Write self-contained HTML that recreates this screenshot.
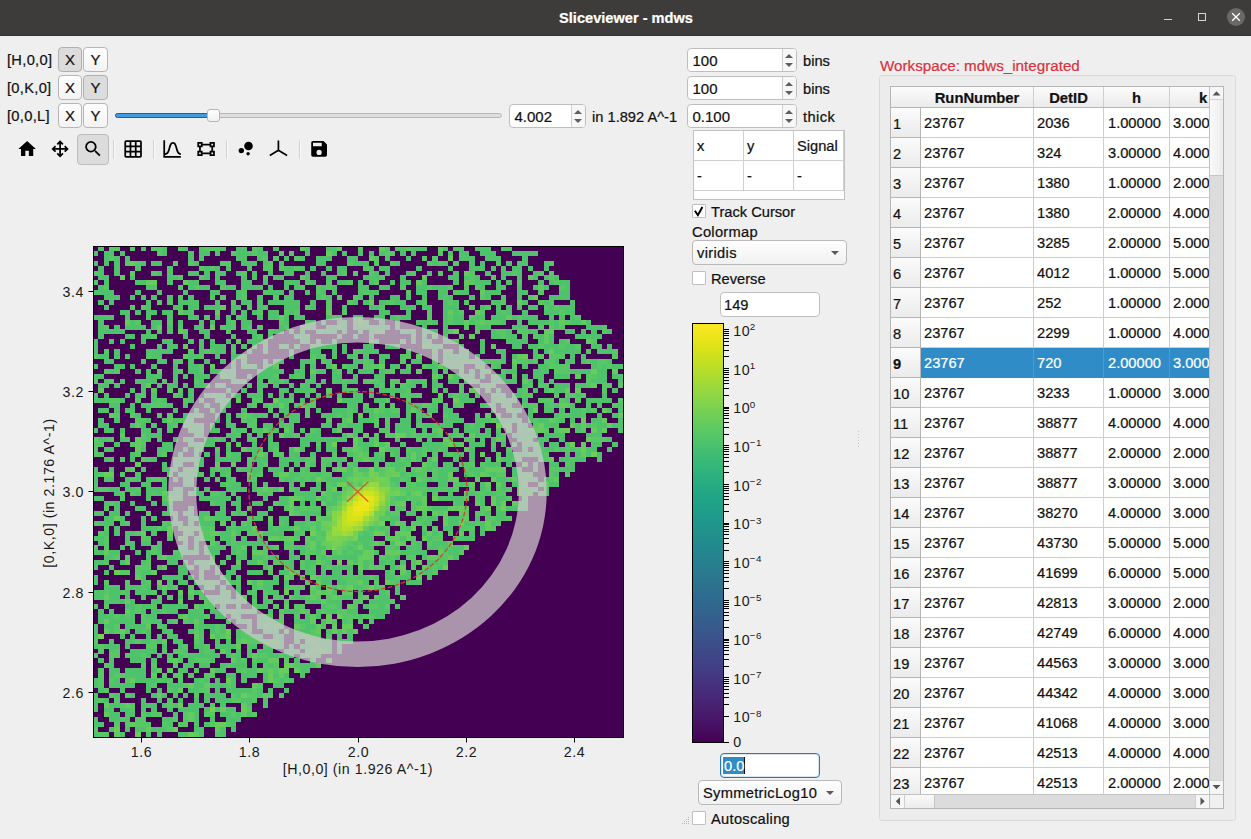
<!DOCTYPE html>
<html>
<head>
<meta charset="utf-8">
<title>Sliceviewer - mdws</title>
<style>
*{box-sizing:border-box;margin:0;padding:0}
html,body{width:1251px;height:839px;overflow:hidden;background:#efefef;font-family:"Liberation Sans",sans-serif;font-size:15px;color:#111}
.a{position:absolute}
.t{position:absolute;white-space:nowrap;line-height:1;-webkit-text-stroke:0.22px}
.btn,.spin .v{-webkit-text-stroke:0.22px}
#titlebar{left:0;top:0;width:1251px;height:36px;background:#3d3c3a;border-bottom:1px solid #343331}
#title{left:0;width:1251px;padding-left:1px;top:11px;text-align:center;color:#fff;font-weight:bold;font-size:14.6px}
.btn{position:absolute;width:24px;height:25px;border:1px solid #b6b6b6;border-radius:4px;background:linear-gradient(#fefefe,#f3f3f3);text-align:center;line-height:23px;font-size:15px}
.btn.on{background:#dcdcdc;border-color:#b0b0b0}
.spin{position:absolute;height:24px;border:1px solid #bfbfbf;border-radius:4px;background:#fff}
.spin .v{position:absolute;left:4.5px;top:4px;line-height:1;font-size:15px}
.spin .ar{position:absolute;right:0;top:0;width:14px;height:22px;border-left:1px solid #cfcfcf;background:#f7f7f7;border-radius:0 3px 3px 0}
.spin .ar:before{content:"";position:absolute;left:2.3px;top:5px;border:4px solid transparent;border-top:0;border-bottom:4px solid #5e5e5e}
.spin .ar:after{content:"";position:absolute;left:2.3px;top:14px;border:4px solid transparent;border-bottom:0;border-top:4px solid #5e5e5e}
.edit{position:absolute;height:25px;border:1px solid #bfbfbf;border-radius:4px;background:#fff}
.chk{position:absolute;width:14px;height:14px;border:1px solid #c0c0c0;background:#fff;border-radius:1px}
.combo{position:absolute;height:25px;border:1px solid #b9b9b9;border-radius:4px;background:linear-gradient(#fefefe,#f1f1f1)}
.combo:after{content:"";position:absolute;right:7px;top:9.5px;border:4px solid transparent;border-bottom:0;border-top:4.5px solid #5a5a5a}
.ic{transform:translate(-0.4px,-0.6px)}
</style>
</head>
<body>
<style>.mt{font-family:"Liberation Sans",sans-serif;font-size:14.2px;letter-spacing:0.55px;fill:#1a1a1a}</style><!-- title bar -->
<div class="a" id="titlebar"></div>
<div class="t" id="title">Sliceviewer - mdws</div>
<svg class="a" style="left:1150px;top:0" width="101" height="36" viewBox="1150 0 101 36">
  <line x1="1164" y1="19.5" x2="1172" y2="19.5" stroke="#d6d5d3" stroke-width="1"/>
  <rect x="1198.5" y="13.5" width="7" height="7" fill="none" stroke="#d6d5d3" stroke-width="1"/>
  <circle cx="1236" cy="17" r="9" fill="#6a6967"/>
  <path d="M1232.2 13.2 L1239.8 20.8 M1239.8 13.2 L1232.2 20.8" stroke="#fff" stroke-width="1.3" fill="none"/>
</svg>

<!-- dimension rows -->
<div class="t" style="left:7px;top:53px;font-size:14.67px;letter-spacing:0.3px">[H,0,0]</div>
<div class="t" style="left:7px;top:81px;font-size:14.67px;letter-spacing:0.3px">[0,K,0]</div>
<div class="t" style="left:7px;top:109px;font-size:14.67px;letter-spacing:0.3px">[0,0,L]</div>
<div class="btn on" style="left:58px;top:47px">X</div><div class="btn" style="left:83px;top:47px;width:25px">Y</div>
<div class="btn" style="left:58px;top:75px">X</div><div class="btn on" style="left:83px;top:75px;width:25px">Y</div>
<div class="btn" style="left:58px;top:103px">X</div><div class="btn" style="left:83px;top:103px;width:25px">Y</div>

<!-- slider -->
<div class="a" style="left:115px;top:113px;width:387px;height:5px;border:1px solid #b8b8b8;border-radius:3px;background:#dedede"></div>
<div class="a" style="left:115px;top:113px;width:98px;height:5px;border:1px solid #1f639d;border-radius:3px;background:#3f9ce1"></div>
<div class="a" style="left:207px;top:109px;width:13px;height:13px;border:1px solid #b5b5b5;border-radius:3px;background:linear-gradient(#ffffff,#f0f0f0)"></div>

<div class="spin" style="left:509px;top:104px;width:77px"><span class="v">4.002</span><span class="ar"></span></div>
<div class="t" style="left:592px;top:110px;font-size:14.67px">in 1.892 A^-1</div>

<div class="spin" style="left:687px;top:48px;width:110px"><span class="v">100</span><span class="ar"></span></div>
<div class="spin" style="left:687px;top:76px;width:110px"><span class="v">100</span><span class="ar"></span></div>
<div class="spin" style="left:687px;top:104px;width:110px"><span class="v">0.100</span><span class="ar"></span></div>
<div class="t" style="left:803px;top:54px;font-size:14.67px">bins</div>
<div class="t" style="left:803px;top:82px;font-size:14.67px">bins</div>
<div class="t" style="left:803px;top:110px;font-size:14.67px;letter-spacing:0.4px">thick</div>
<!-- toolbar -->
<div class="a" style="left:77px;top:134px;width:32px;height:31px;background:#dcdcdc;border:1px solid #bcbcbc;border-radius:4px"></div>
<div class="a" style="left:113px;top:140px;width:1px;height:19px;background:#d2d2d2"></div><div class="a" style="left:114px;top:140px;width:1px;height:19px;background:#fafafa"></div>
<div class="a" style="left:153px;top:140px;width:1px;height:19px;background:#d2d2d2"></div><div class="a" style="left:154px;top:140px;width:1px;height:19px;background:#fafafa"></div>
<div class="a" style="left:226px;top:140px;width:1px;height:19px;background:#d2d2d2"></div><div class="a" style="left:227px;top:140px;width:1px;height:19px;background:#fafafa"></div>
<div class="a" style="left:299px;top:140px;width:1px;height:19px;background:#d2d2d2"></div><div class="a" style="left:300px;top:140px;width:1px;height:19px;background:#fafafa"></div>
<svg class="a ic" style="left:16.5px;top:138.5px" width="21" height="21" viewBox="0 0 24 24"><path fill="#000" d="M10,20V14H14V20H19V12H22L12,3L2,12H5V20H10Z"/></svg>
<svg class="a ic" style="left:49.7px;top:138.6px" width="21" height="21" viewBox="0 0 24 24"><path fill="#000" d="M13,11H18L16.5,9.5L17.92,8.08L21.84,12L17.92,15.92L16.5,14.5L18,13H13V18L14.5,16.5L15.92,17.92L12,21.84L8.08,17.92L9.5,16.5L11,18V13H6L7.5,14.5L6.08,15.92L2.16,12L6.08,8.08L7.5,9.5L6,11H11V6L9.5,7.5L8.08,6.08L12,2.16L15.92,6.08L14.5,7.5L13,6V11Z"/></svg>
<svg class="a ic" style="left:83px;top:139px" width="21" height="21" viewBox="0 0 24 24"><path fill="#000" d="M9.5,3A6.5,6.5 0 0,1 16,9.5C16,11.11 15.41,12.59 14.44,13.73L14.71,14H15.5L20.5,19L19,20.5L14,15.5V14.71L13.73,14.44C12.59,15.41 11.11,16 9.5,16A6.5,6.5 0 0,1 3,9.5A6.5,6.5 0 0,1 9.5,3M9.5,5C7,5 5,7 5,9.5C5,12 7,14 9.5,14C12,14 14,12 14,9.5C14,7 12,5 9.5,5Z"/></svg>
<svg class="a ic" style="left:122.9px;top:138.7px" width="21" height="21" viewBox="0 0 24 24"><path fill="#000" d="M10,4V8H14V4H10M16,4V8H20V4H16M16,10V14H20V10H16M16,16V20H20V16H16M14,20V16H10V20H14M8,20V16H4V20H8M8,14V10H4V14H8M8,8V4H4V8H8M10,14H14V10H10V14M4,2H20A2,2 0 0,1 22,4V20A2,2 0 0,1 20,22H4C2.92,22 2,21.1 2,20V4A2,2 0 0,1 4,2Z"/></svg>
<svg class="a ic" style="left:162.4px;top:138.5px" width="21" height="21" viewBox="0 0 24 24"><path fill="#000" d="M9.96,11.31C10.82,8.1 11.5,6 13,6C14.5,6 15.18,8.1 16.04,11.31C17,14.92 18.1,19 22,19V17C19.8,17 19,14.54 17.97,10.8C17.08,7.46 16.15,4 13,4C9.85,4 8.92,7.46 8.03,10.8C7.03,14.54 6.2,17 4,17V2H2V22H22V20H4V19C7.9,19 9,14.92 9.96,11.31Z"/></svg>
<svg class="a ic" style="left:195.6px;top:138.5px" width="21" height="21" viewBox="0 0 24 24"><path fill="#000" d="M2,4H8V6H16V4H22V10H20V14H22V20H16V18H8V20H2V14H4V10H2V4M16,10V8H8V10H6V14H8V16H16V14H18V10H16M4,6V8H6V6H4M18,6V8H20V6H18M4,16V18H6V16H4M18,16V18H20V16H18Z"/></svg>
<svg class="a ic" style="left:234px;top:139px" width="24" height="24" viewBox="234 139 24 24"><circle cx="248.9" cy="146.6" r="4.3"/><circle cx="241.7" cy="151.2" r="2.7"/><circle cx="248.5" cy="154.4" r="1.7"/></svg>
<svg class="a ic" style="left:266px;top:136px" width="26" height="26" viewBox="266 136 26 26"><path d="M278.8 141 V150.9 L270.2 156 M278.8 150.9 L287.5 156" fill="none" stroke="#000" stroke-width="1.7" stroke-linecap="butt"/></svg>
<svg class="a ic" style="left:308.5px;top:138.6px" width="21" height="21" viewBox="0 0 24 24"><path fill="#000" d="M15,9H5V5H15M12,19A3,3 0 0,1 9,16A3,3 0 0,1 12,13A3,3 0 0,1 15,16A3,3 0 0,1 12,19M17,3H5C3.89,3 3,3.9 3,5V19A2,2 0 0,0 5,21H19A2,2 0 0,0 21,19V7L17,3Z"/></svg>
<svg class="a" style="left:92.9px;top:245.9px" width="530.0" height="491.0" viewBox="0 0 100 100" preserveAspectRatio="none" shape-rendering="crispEdges"><rect width="100" height="100" fill="#440154"/><g stroke-width="1.02" fill="none" transform="translate(0,0.5)"><path stroke="#4ec36b" d="M1 0h1M9 0h1M13 0h1M17 0h1M20 0h1M24 0h1M27 0h2M31 0h1M34 0h1M40 0h1M44 0h2M55 0h1M57 0h2M60 0h3M66 0h1M68 0h2M72 0h3M77 0h2M0 1h1M2 1h2M5 1h1M13 1h1M18 1h1M20 1h2M23 1h1M27 1h3M31 1h2M40 1h1M45 1h1M47 1h1M50 1h1M52 1h1M54 1h1M58 1h1M60 1h1M67 1h1M69 1h2M73 1h3M79 1h5M2 2h1M4 2h1M6 2h1M18 2h1M20 2h1M27 2h2M31 2h1M36 2h1M39 2h1M42 2h3M48 2h2M55 2h1M59 2h1M69 2h3M74 2h3M81 2h1M0 3h1M2 3h1M4 3h1M9 3h1M11 3h2M19 3h1M28 3h3M32 3h1M35 3h1M42 3h2M49 3h3M57 3h1M64 3h1M66 3h1M71 3h1M73 3h1M78 3h1M80 3h2M85 3h1M1 4h1M4 4h1M8 4h1M14 4h1M21 4h1M23 4h1M25 4h1M29 4h1M36 4h2M39 4h1M41 4h1M44 4h1M46 4h2M52 4h1M54 4h2M61 4h1M67 4h1M71 4h3M75 4h1M77 4h1M79 4h2M82 4h1M85 4h1M1 5h1M4 5h1M12 5h1M14 5h1M18 5h2M21 5h1M23 5h2M27 5h1M30 5h1M33 5h1M36 5h2M40 5h1M43 5h1M46 5h1M53 5h1M55 5h1M59 5h1M63 5h1M68 5h1M74 5h1M77 5h2M80 5h1M83 5h1M1 6h2M7 6h1M14 6h2M21 6h1M23 6h1M28 6h1M30 6h1M34 6h2M40 6h1M44 6h2M51 6h3M58 6h1M67 6h2M70 6h1M72 6h1M77 6h1M80 6h1M83 6h1M85 6h1M87 6h1M2 7h1M8 7h2M14 7h1M18 7h2M23 7h2M28 7h2M32 7h1M36 7h3M41 7h1M46 7h2M50 7h1M52 7h1M56 7h1M58 7h2M62 7h1M68 7h1M72 7h3M76 7h1M78 7h1M84 7h1M86 7h1M88 7h2M1 8h1M10 8h2M18 8h1M20 8h2M25 8h2M28 8h4M33 8h1M36 8h1M38 8h1M43 8h1M45 8h1M50 8h2M54 8h2M61 8h2M64 8h3M73 8h1M76 8h2M80 8h1M83 8h1M85 8h1M89 8h1M0 9h4M8 9h1M12 9h1M17 9h1M22 9h2M27 9h1M33 9h3M37 9h1M40 9h1M43 9h1M45 9h1M50 9h1M52 9h2M61 9h2M65 9h2M69 9h2M74 9h3M80 9h2M88 9h2M2 10h3M7 10h1M9 10h1M11 10h1M14 10h1M18 10h1M27 10h1M31 10h1M36 10h2M42 10h1M44 10h1M50 10h1M52 10h1M56 10h2M59 10h1M62 10h1M65 10h1M67 10h1M71 10h1M74 10h1M77 10h1M80 10h1M86 10h4M1 11h1M3 11h1M10 11h1M16 11h4M23 11h1M28 11h2M31 11h1M33 11h6M41 11h1M49 11h1M51 11h1M54 11h1M57 11h2M61 11h1M66 11h1M68 11h1M75 11h2M81 11h1M85 11h1M90 11h1M2 12h1M10 12h1M15 12h2M18 12h2M21 12h3M26 12h2M31 12h1M36 12h3M41 12h1M47 12h1M52 12h2M58 12h3M62 12h2M66 12h3M73 12h1M76 12h1M78 12h1M80 12h1M82 12h2M86 12h1M88 12h3M5 13h2M8 13h1M10 13h2M13 13h2M17 13h2M26 13h1M28 13h1M30 13h1M33 13h2M37 13h1M54 13h2M59 13h1M66 13h1M68 13h1M76 13h1M78 13h1M81 13h1M85 13h3M89 13h2M0 14h4M6 14h1M10 14h1M14 14h1M18 14h2M23 14h1M25 14h1M28 14h1M31 14h1M33 14h2M36 14h1M38 14h2M44 14h1M46 14h1M49 14h2M53 14h2M56 14h1M58 14h2M66 14h1M68 14h2M72 14h2M75 14h3M79 14h1M81 14h3M86 14h1M88 14h1M90 14h1M1 15h1M7 15h1M11 15h2M16 15h1M20 15h1M22 15h1M25 15h1M28 15h2M36 15h1M41 15h1M43 15h1M46 15h2M49 15h1M51 15h1M54 15h1M57 15h1M61 15h2M64 15h1M66 15h1M68 15h2M71 15h1M77 15h1M80 15h1M82 15h4M87 15h1M90 15h2M93 15h1M1 16h1M4 16h1M6 16h4M11 16h1M14 16h1M19 16h2M25 16h1M28 16h1M35 16h1M41 16h1M44 16h2M47 16h1M49 16h7M57 16h1M62 16h1M66 16h1M72 16h3M79 16h3M87 16h1M93 16h3M1 17h5M10 17h1M12 17h1M14 17h1M20 17h2M29 17h2M34 17h2M37 17h1M39 17h1M42 17h4M47 17h1M50 17h1M52 17h1M58 17h3M63 17h2M66 17h1M75 17h1M78 17h1M82 17h2M89 17h2M92 17h1M94 17h1M97 17h1M1 18h1M6 18h2M9 18h2M17 18h1M21 18h1M26 18h1M30 18h1M33 18h1M38 18h3M49 18h1M52 18h1M62 18h1M75 18h2M78 18h2M84 18h1M86 18h1M91 18h5M0 19h1M3 19h1M5 19h1M9 19h1M13 19h2M18 19h1M20 19h1M22 19h1M25 19h1M29 19h4M39 19h2M45 19h1M53 19h1M60 19h1M63 19h1M67 19h1M73 19h1M78 19h4M84 19h1M86 19h1M88 19h1M0 20h1M7 20h1M12 20h1M14 20h2M20 20h1M22 20h3M26 20h1M28 20h1M30 20h1M32 20h1M36 20h1M41 20h5M47 20h1M51 20h2M55 20h2M64 20h1M69 20h1M73 20h1M79 20h2M82 20h2M85 20h3M89 20h2M94 20h2M97 20h1M0 21h1M4 21h1M10 21h5M20 21h1M23 21h2M29 21h1M37 21h1M41 21h2M45 21h1M47 21h1M51 21h3M69 21h2M73 21h1M76 21h2M83 21h1M85 21h1M87 21h5M95 21h3M1 22h2M4 22h1M6 22h1M11 22h2M18 22h2M23 22h1M26 22h2M37 22h1M42 22h1M45 22h1M48 22h1M51 22h1M54 22h2M64 22h1M66 22h5M72 22h1M77 22h1M79 22h1M83 22h1M90 22h1M92 22h1M2 23h2M12 23h2M18 23h1M21 23h1M24 23h1M26 23h1M32 23h1M35 23h1M39 23h2M44 23h1M49 23h2M52 23h1M54 23h1M60 23h2M66 23h3M70 23h1M72 23h2M77 23h1M82 23h1M87 23h1M89 23h2M92 23h1M94 23h1M97 23h1M0 24h1M4 24h2M7 24h1M11 24h1M15 24h1M18 24h2M26 24h1M28 24h3M32 24h2M39 24h1M41 24h1M44 24h1M48 24h2M56 24h2M63 24h2M66 24h3M73 24h1M76 24h1M81 24h1M84 24h2M94 24h1M96 24h1M98 24h2M3 25h1M8 25h1M10 25h1M15 25h1M18 25h2M22 25h4M31 25h5M38 25h2M42 25h2M45 25h1M48 25h1M50 25h3M54 25h1M58 25h2M64 25h1M71 25h1M73 25h1M78 25h2M83 25h3M90 25h4M95 25h2M0 26h2M10 26h3M15 26h1M17 26h1M19 26h3M25 26h2M29 26h1M31 26h3M37 26h1M39 26h1M41 26h1M45 26h2M49 26h1M53 26h2M65 26h1M68 26h4M73 26h1M76 26h2M81 26h1M83 26h2M87 26h3M95 26h2M98 26h2M2 27h1M5 27h1M8 27h4M15 27h1M20 27h1M26 27h3M31 27h1M34 27h1M36 27h1M40 27h2M43 27h1M45 27h2M48 27h2M54 27h1M60 27h2M64 27h1M67 27h2M70 27h1M72 27h1M75 27h5M82 27h1M84 27h1M86 27h1M94 27h3M99 27h1M1 28h2M4 28h1M9 28h1M12 28h1M14 28h2M17 28h1M19 28h2M24 28h1M31 28h2M34 28h1M37 28h1M40 28h1M42 28h1M47 28h1M53 28h1M59 28h2M62 28h1M64 28h2M81 28h1M87 28h3M91 28h2M7 29h1M9 29h1M18 29h1M25 29h1M28 29h1M31 29h1M35 29h2M38 29h3M47 29h1M52 29h1M54 29h5M66 29h1M76 29h1M80 29h1M83 29h1M85 29h1M87 29h2M98 29h1M0 30h1M2 30h1M6 30h1M8 30h1M11 30h1M16 30h1M18 30h1M21 30h1M24 30h1M27 30h1M29 30h3M33 30h1M35 30h1M37 30h1M40 30h1M42 30h1M44 30h1M46 30h1M49 30h2M52 30h1M56 30h1M60 30h1M67 30h1M69 30h2M76 30h1M79 30h2M91 30h1M96 30h1M0 31h3M5 31h1M11 31h1M13 31h1M18 31h1M20 31h1M23 31h3M35 31h2M39 31h1M47 31h4M53 31h2M69 31h3M75 31h1M78 31h2M81 31h1M89 31h1M93 31h5M3 32h2M7 32h1M9 32h2M14 32h1M17 32h1M21 32h1M25 32h1M29 32h1M32 32h1M34 32h1M36 32h1M38 32h1M48 32h2M59 32h3M64 32h1M66 32h1M73 32h1M75 32h1M77 32h1M85 32h1M87 32h1M90 32h1M93 32h1M95 32h1M99 32h1M1 33h2M4 33h1M6 33h2M10 33h1M15 33h1M19 33h1M22 33h1M24 33h1M28 33h1M35 33h2M42 33h1M45 33h3M49 33h1M51 33h2M55 33h1M59 33h1M61 33h1M63 33h2M66 33h2M79 33h2M82 33h1M85 33h2M88 33h1M90 33h2M93 33h1M97 33h1M99 33h1M8 34h1M17 34h3M23 34h1M25 34h1M27 34h1M30 34h2M34 34h1M36 34h3M43 34h3M47 34h1M52 34h1M54 34h4M59 34h1M61 34h2M67 34h2M72 34h1M79 34h1M82 34h1M87 34h1M90 34h2M95 34h1M98 34h1M1 35h1M4 35h1M10 35h1M13 35h1M15 35h1M17 35h2M23 35h1M25 35h1M29 35h1M35 35h1M37 35h2M50 35h3M58 35h2M61 35h1M66 35h4M72 35h3M76 35h4M82 35h1M84 35h2M88 35h1M90 35h1M94 35h2M99 35h1M1 36h2M7 36h1M9 36h1M11 36h1M14 36h1M17 36h1M20 36h1M22 36h1M25 36h2M32 36h2M35 36h1M37 36h1M43 36h2M46 36h1M48 36h3M57 36h3M62 36h6M70 36h1M72 36h1M81 36h1M85 36h3M91 36h1M93 36h1M95 36h2M98 36h2M0 37h1M2 37h2M5 37h1M9 37h2M12 37h1M14 37h1M19 37h1M22 37h2M27 37h1M31 37h1M33 37h2M37 37h1M39 37h1M42 37h1M45 37h1M49 37h2M57 37h3M62 37h1M68 37h1M70 37h3M74 37h1M81 37h1M91 37h1M95 37h1M99 37h1M10 38h3M19 38h2M25 38h2M29 38h1M31 38h1M33 38h1M36 38h2M40 38h3M47 38h1M49 38h1M59 38h1M61 38h1M63 38h2M67 38h1M72 38h3M76 38h1M79 38h5M85 38h4M93 38h3M1 39h2M5 39h2M10 39h1M12 39h1M15 39h1M18 39h1M21 39h2M24 39h1M26 39h1M29 39h1M33 39h1M39 39h9M50 39h1M52 39h1M57 39h1M63 39h1M71 39h1M73 39h1M75 39h1M80 39h2M84 39h2M88 39h1M97 39h1M4 40h1M13 40h2M18 40h5M30 40h1M33 40h2M39 40h2M44 40h1M50 40h3M54 40h1M58 40h1M62 40h4M71 40h3M77 40h1M81 40h2M84 40h1M86 40h2M89 40h1M94 40h2M98 40h1M2 41h2M9 41h1M12 41h3M17 41h1M20 41h1M25 41h1M29 41h3M33 41h1M37 41h1M39 41h1M42 41h1M44 41h2M51 41h1M56 41h2M60 41h2M63 41h2M66 41h1M71 41h1M75 41h1M81 41h1M83 41h1M85 41h2M88 41h1M90 41h1M93 41h2M97 41h1M7 42h1M12 42h1M16 42h1M19 42h1M21 42h1M23 42h1M26 42h2M30 42h1M37 42h2M41 42h1M48 42h1M53 42h1M57 42h1M59 42h1M61 42h1M66 42h1M68 42h2M71 42h1M78 42h4M83 42h2M89 42h1M91 42h1M93 42h1M95 42h1M2 43h1M7 43h1M11 43h1M15 43h1M17 43h4M23 43h5M30 43h3M35 43h5M46 43h1M53 43h2M57 43h1M59 43h1M61 43h1M63 43h1M68 43h1M71 43h1M74 43h1M77 43h2M88 43h2M91 43h2M95 43h1M13 44h1M15 44h2M19 44h2M31 44h1M35 44h2M38 44h1M41 44h1M44 44h1M46 44h1M49 44h1M56 44h3M64 44h1M66 44h2M69 44h1M74 44h3M78 44h1M83 44h1M86 44h2M90 44h1M0 45h1M3 45h1M9 45h1M13 45h3M18 45h2M22 45h1M24 45h2M28 45h4M33 45h3M40 45h1M48 45h1M50 45h2M53 45h1M57 45h1M63 45h1M65 45h4M71 45h3M79 45h2M83 45h1M88 45h3M0 46h1M8 46h1M16 46h4M22 46h1M24 46h1M30 46h1M34 46h1M37 46h2M42 46h1M47 46h2M58 46h1M60 46h1M65 46h2M70 46h1M72 46h1M75 46h1M79 46h1M87 46h1M0 47h1M2 47h2M6 47h1M8 47h1M10 47h1M13 47h1M17 47h2M21 47h1M25 47h1M36 47h2M39 47h1M41 47h1M44 47h4M56 47h2M59 47h1M63 47h1M65 47h2M76 47h2M80 47h1M83 47h1M85 47h1M0 48h1M5 48h2M9 48h2M13 48h1M17 48h2M24 48h1M26 48h2M30 48h1M32 48h1M37 48h1M42 48h1M45 48h1M48 48h1M57 48h1M61 48h2M65 48h2M69 48h2M73 48h1M77 48h1M79 48h2M86 48h2M0 49h1M3 49h2M6 49h2M10 49h4M15 49h2M19 49h1M21 49h1M25 49h4M30 49h1M34 49h1M38 49h1M41 49h2M63 49h2M67 49h1M73 49h1M77 49h1M81 49h1M85 49h1M4 50h1M8 50h1M10 50h1M12 50h1M14 50h3M18 50h3M24 50h1M32 50h1M38 50h4M45 50h2M59 50h1M62 50h1M67 50h1M71 50h1M74 50h2M81 50h1M85 50h1M0 51h2M10 51h1M15 51h2M20 51h6M27 51h1M32 51h1M35 51h2M40 51h2M43 51h1M45 51h1M57 51h2M65 51h5M73 51h1M76 51h2M2 52h1M4 52h1M7 52h1M11 52h1M13 52h2M23 52h2M26 52h2M30 52h2M35 52h2M39 52h1M41 52h1M44 52h2M61 52h1M68 52h2M73 52h1M76 52h1M81 52h1M4 53h1M8 53h2M14 53h1M18 53h1M24 53h1M27 53h1M29 53h1M33 53h1M38 53h1M64 53h3M78 53h2M81 53h1M0 54h2M3 54h2M6 54h1M13 54h1M15 54h1M17 54h2M20 54h2M23 54h2M27 54h1M31 54h2M39 54h4M55 54h1M59 54h2M74 54h1M76 54h2M2 55h2M5 55h1M9 55h1M11 55h1M15 55h1M18 55h1M20 55h1M23 55h3M30 55h2M35 55h2M40 55h1M56 55h2M61 55h1M63 55h2M67 55h2M72 55h1M76 55h2M1 56h3M5 56h1M9 56h1M14 56h2M18 56h1M20 56h3M26 56h1M29 56h1M36 56h1M38 56h2M42 56h1M56 56h1M62 56h2M67 56h2M70 56h2M73 56h1M75 56h1M4 57h1M9 57h3M13 57h1M16 57h1M25 57h1M27 57h3M33 57h1M35 57h3M39 57h2M42 57h1M52 57h1M54 57h1M59 57h1M66 57h2M73 57h1M2 58h1M4 58h1M6 58h2M11 58h1M18 58h1M24 58h2M27 58h1M32 58h4M38 58h1M43 58h1M51 58h1M55 58h1M62 58h1M64 58h1M71 58h1M73 58h1M0 59h2M6 59h1M19 59h1M24 59h2M28 59h1M31 59h1M41 59h1M50 59h3M58 59h1M63 59h1M69 59h3M1 60h1M7 60h1M9 60h2M12 60h1M17 60h1M19 60h1M23 60h1M25 60h1M27 60h6M42 60h1M49 60h1M51 60h1M56 60h1M61 60h1M64 60h3M5 61h1M7 61h1M12 61h1M16 61h2M19 61h1M21 61h4M26 61h1M30 61h1M32 61h2M38 61h2M42 61h2M48 61h1M51 61h2M57 61h1M59 61h3M63 61h2M66 61h1M68 61h2M0 62h2M3 62h2M8 62h1M10 62h1M12 62h1M16 62h4M21 62h3M26 62h1M28 62h1M37 62h1M39 62h1M42 62h1M47 62h1M49 62h2M53 62h1M58 62h5M67 62h2M2 63h2M10 63h1M14 63h2M25 63h1M27 63h2M30 63h2M33 63h2M37 63h2M43 63h1M45 63h5M55 63h1M57 63h1M62 63h1M65 63h1M68 63h1M0 64h2M5 64h1M9 64h1M14 64h2M17 64h1M19 64h1M21 64h1M29 64h2M32 64h1M35 64h1M37 64h1M40 64h2M44 64h1M49 64h1M51 64h1M54 64h1M56 64h1M58 64h1M63 64h2M0 65h1M3 65h1M12 65h1M16 65h2M20 65h2M23 65h1M26 65h2M32 65h1M37 65h1M40 65h1M43 65h1M45 65h4M51 65h1M56 65h1M63 65h1M65 65h1M2 66h1M9 66h2M16 66h2M23 66h1M25 66h2M29 66h3M35 66h2M40 66h2M43 66h1M45 66h2M55 66h1M59 66h1M62 66h2M0 67h1M9 67h1M13 67h4M18 67h1M24 67h2M27 67h1M34 67h1M43 67h4M50 67h2M53 67h1M55 67h2M58 67h2M63 67h1M0 68h1M9 68h1M14 68h1M16 68h2M19 68h2M23 68h1M26 68h1M30 68h1M32 68h3M36 68h1M43 68h2M46 68h2M51 68h1M57 68h1M59 68h3M2 69h3M7 69h2M10 69h1M12 69h1M14 69h1M22 69h1M24 69h1M27 69h1M30 69h1M32 69h2M42 69h1M45 69h1M49 69h2M57 69h1M0 70h2M3 70h2M6 70h1M8 70h3M13 70h1M19 70h1M24 70h1M27 70h1M29 70h1M33 70h2M38 70h1M45 70h1M50 70h1M54 70h1M57 70h1M0 71h2M3 71h2M6 71h1M9 71h1M16 71h1M21 71h5M30 71h1M35 71h1M38 71h2M47 71h2M54 71h2M2 72h4M7 72h1M11 72h2M22 72h1M26 72h3M32 72h1M40 72h3M44 72h3M52 72h4M6 73h2M9 73h2M13 73h5M20 73h1M24 73h1M27 73h1M31 73h2M43 73h1M46 73h1M51 73h1M54 73h1M57 73h1M1 74h1M3 74h1M7 74h1M9 74h1M11 74h2M14 74h2M18 74h2M22 74h4M27 74h2M33 74h1M36 74h3M42 74h1M44 74h2M48 74h2M52 74h4M1 75h3M5 75h1M7 75h1M10 75h2M18 75h3M23 75h2M26 75h2M31 75h1M40 75h1M42 75h1M50 75h1M53 75h2M1 76h1M3 76h5M11 76h2M14 76h1M18 76h1M20 76h1M27 76h1M31 76h2M34 76h1M38 76h3M43 76h1M47 76h1M52 76h1M0 77h1M2 77h2M6 77h4M13 77h1M20 77h3M24 77h1M31 77h1M33 77h1M35 77h1M40 77h2M51 77h1M0 78h1M3 78h1M6 78h1M8 78h1M10 78h1M13 78h2M18 78h1M20 78h1M22 78h1M24 78h1M27 78h1M29 78h1M32 78h3M38 78h3M44 78h1M46 78h1M48 78h1M0 79h1M5 79h1M7 79h1M10 79h1M12 79h1M14 79h2M20 79h1M23 79h1M27 79h1M31 79h1M34 79h2M38 79h1M46 79h1M48 79h1M3 80h1M6 80h2M9 80h2M12 80h1M15 80h2M20 80h1M23 80h1M25 80h1M35 80h1M38 80h1M42 80h3M46 80h3M0 81h1M2 81h3M6 81h1M13 81h1M16 81h1M19 81h2M23 81h4M29 81h2M33 81h3M37 81h1M40 81h1M43 81h2M46 81h1M3 82h1M7 82h5M17 82h1M20 82h1M22 82h1M25 82h1M27 82h1M29 82h1M31 82h3M36 82h3M44 82h1M46 82h1M7 83h2M10 83h1M12 83h1M14 83h1M16 83h1M18 83h6M25 83h1M27 83h1M29 83h1M33 83h2M36 83h1M42 83h1M1 84h1M3 84h1M7 84h3M11 84h1M16 84h1M18 84h1M22 84h1M27 84h1M31 84h2M38 84h1M41 84h1M3 85h1M17 85h2M20 85h2M24 85h1M26 85h3M30 85h1M33 85h1M39 85h3M3 86h2M6 86h4M11 86h1M16 86h2M23 86h2M29 86h2M39 86h2M3 87h1M6 87h4M25 87h2M28 87h3M32 87h1M34 87h1M36 87h1M39 87h1M0 88h1M4 88h1M8 88h4M13 88h1M19 88h1M21 88h1M23 88h1M26 88h1M28 88h1M32 88h1M35 88h1M37 88h1M0 89h1M3 89h5M10 89h1M14 89h3M19 89h2M22 89h3M26 89h1M34 89h2M1 90h1M5 90h1M10 90h1M12 90h1M15 90h1M18 90h2M23 90h1M25 90h5M31 90h1M33 90h1M36 90h1M0 91h1M4 91h1M7 91h1M11 91h1M13 91h1M15 91h1M17 91h1M21 91h4M27 91h1M31 91h1M35 91h1M0 92h1M2 92h1M9 92h1M12 92h1M16 92h1M19 92h1M21 92h1M23 92h3M28 92h2M32 92h1M0 93h1M3 93h2M9 93h3M13 93h1M15 93h1M18 93h3M24 93h1M29 93h1M32 93h1M0 94h1M2 94h2M5 94h2M9 94h1M11 94h1M14 94h1M16 94h4M21 94h1M23 94h1M25 94h2M3 95h2M6 95h2M10 95h1M15 95h1M19 95h1M24 95h2M27 95h1M29 95h1M0 96h1M3 96h2M6 96h1M13 96h2M19 96h1M22 96h1M25 96h3M0 97h2M14 97h1M19 97h1M21 97h1M26 97h1M3 98h1M6 98h1M8 98h2M11 98h3M19 98h2M24 98h1M26 98h1M0 99h1M5 99h1M10 99h1M12 99h1M16 99h2M20 99h1M24 99h1"/><path stroke="#58c765" d="M3 0h2M7 0h1M11 0h2M16 0h1M21 0h3M30 0h1M39 0h1M50 0h1M59 0h1M12 1h1M26 1h1M30 1h1M35 1h1M37 1h1M55 1h2M65 1h1M3 2h1M32 2h1M34 2h1M38 2h1M53 2h1M62 2h1M64 2h1M6 3h1M8 3h1M15 3h1M18 3h1M24 3h2M33 3h1M48 3h1M53 3h1M56 3h1M63 3h1M65 3h1M68 3h1M76 3h1M86 3h1M20 4h1M22 4h1M32 4h2M35 4h1M38 4h1M51 4h1M0 5h1M11 5h1M28 5h1M47 5h1M49 5h1M52 5h1M60 5h1M65 5h1M71 5h1M79 5h1M84 5h1M86 5h1M16 6h1M20 6h1M32 6h1M54 6h1M71 6h1M75 6h1M86 6h1M0 7h1M40 7h1M44 7h1M48 7h1M53 7h1M71 7h1M80 7h1M87 7h1M2 8h1M16 8h1M19 8h1M24 8h1M39 8h1M42 8h1M44 8h1M58 8h1M63 8h1M67 8h1M70 8h1M72 8h1M88 8h1M28 9h1M32 9h1M42 9h1M51 9h1M59 9h1M68 9h1M84 9h1M16 10h1M22 10h1M24 10h1M28 10h1M34 10h1M43 10h1M46 10h1M49 10h1M66 10h1M73 10h1M82 10h1M12 11h1M14 11h1M26 11h1M44 11h1M48 11h1M55 11h2M62 11h1M67 11h1M70 11h1M77 11h1M84 11h1M86 11h1M7 12h1M9 12h1M29 12h1M32 12h1M40 12h1M44 12h1M54 12h1M71 12h1M74 12h1M85 12h1M87 12h1M31 13h1M36 13h1M38 13h1M47 13h1M63 13h1M69 13h1M73 13h1M77 13h1M88 13h1M21 14h1M27 14h1M45 14h1M57 14h1M63 14h1M67 14h1M71 14h1M80 14h1M91 14h1M8 15h1M14 15h1M26 15h1M35 15h1M40 15h1M63 15h1M67 15h1M72 15h1M74 15h3M86 15h1M89 15h1M2 16h1M16 16h1M24 16h1M26 16h1M29 16h1M31 16h1M36 16h1M39 16h2M70 16h1M84 16h1M86 16h1M88 16h1M96 16h1M17 17h1M25 17h1M33 17h1M53 17h1M62 17h1M67 17h1M72 17h1M76 17h2M80 17h2M96 17h1M11 18h1M31 18h1M46 18h1M60 18h1M66 18h1M69 18h1M77 18h1M81 18h1M83 18h1M42 19h1M58 19h1M62 19h1M66 19h1M89 19h1M94 19h1M35 20h1M38 20h1M57 20h1M65 20h1M84 20h1M88 20h1M91 20h1M2 21h1M18 21h1M21 21h2M26 21h1M32 21h1M49 21h2M59 21h1M64 21h1M66 21h2M93 21h1M98 21h1M0 22h1M10 22h1M20 22h1M28 22h1M41 22h1M43 22h1M49 22h1M58 22h2M84 22h1M86 22h3M98 22h1M9 23h1M15 23h2M28 23h1M34 23h1M41 23h1M43 23h1M51 23h1M58 23h1M64 23h1M69 23h1M71 23h1M74 23h3M80 23h2M83 23h1M85 23h2M93 23h1M95 23h2M20 24h1M47 24h1M51 24h3M59 24h1M62 24h1M69 24h1M72 24h1M75 24h1M79 24h1M86 24h4M95 24h1M97 24h1M2 25h1M4 25h1M16 25h1M20 25h1M26 25h1M46 25h1M55 25h2M66 25h1M69 25h1M74 25h1M77 25h1M87 25h3M24 26h1M34 26h1M38 26h1M79 26h1M93 26h2M0 27h1M3 27h1M13 27h1M19 27h1M33 27h1M35 27h1M47 27h1M51 27h3M56 27h2M59 27h1M62 27h1M93 27h1M21 28h1M23 28h1M29 28h1M39 28h1M54 28h1M56 28h1M58 28h1M69 28h1M73 28h1M75 28h1M82 28h1M84 28h2M93 28h1M96 28h2M99 28h1M11 29h1M14 29h1M16 29h1M41 29h1M48 29h2M59 29h1M64 29h1M69 29h1M74 29h1M81 29h1M96 29h1M9 30h1M15 30h1M22 30h2M58 30h2M61 30h1M68 30h1M72 30h1M75 30h1M77 30h1M81 30h2M87 30h1M89 30h2M92 30h1M3 31h2M8 31h1M12 31h1M17 31h1M30 31h2M37 31h1M41 31h1M55 31h1M59 31h1M64 31h2M76 31h2M84 31h3M88 31h1M91 31h1M99 31h1M11 32h3M24 32h1M30 32h1M33 32h1M40 32h2M51 32h1M54 32h1M56 32h1M63 32h1M68 32h2M74 32h1M78 32h1M81 32h3M86 32h1M98 32h1M33 33h1M40 33h1M48 33h1M54 33h1M56 33h2M75 33h1M78 33h1M92 33h1M94 33h1M4 34h1M7 34h1M12 34h1M14 34h1M29 34h1M32 34h1M40 34h1M46 34h1M48 34h1M53 34h1M66 34h1M76 34h1M88 34h2M92 34h1M8 35h2M16 35h1M28 35h1M30 35h1M44 35h1M47 35h1M53 35h1M55 35h1M83 35h1M87 35h1M15 36h1M18 36h2M29 36h2M36 36h1M47 36h1M53 36h1M55 36h1M61 36h1M71 36h1M73 36h1M77 36h1M80 36h1M83 36h1M94 36h1M18 37h1M20 37h1M26 37h1M28 37h1M30 37h1M41 37h1M54 37h2M60 37h1M64 37h1M76 37h1M78 37h1M80 37h1M82 37h1M85 37h1M87 37h1M92 37h1M9 38h1M27 38h1M38 38h1M53 38h1M55 38h2M60 38h1M62 38h1M65 38h1M68 38h2M77 38h1M3 39h1M9 39h1M17 39h1M23 39h1M30 39h1M53 39h1M61 39h1M67 39h1M70 39h1M77 39h1M82 39h1M94 39h3M0 40h2M7 40h1M9 40h1M25 40h1M27 40h1M42 40h1M66 40h1M68 40h1M75 40h1M79 40h1M0 41h1M19 41h1M23 41h1M34 41h1M47 41h2M50 41h1M55 41h1M59 41h1M62 41h1M65 41h1M78 41h1M84 41h1M87 41h1M89 41h1M91 41h1M0 42h2M8 42h1M13 42h1M25 42h1M32 42h1M34 42h2M45 42h1M49 42h1M51 42h1M54 42h1M56 42h1M62 42h1M64 42h1M67 42h1M76 42h1M85 42h1M3 43h1M5 43h1M9 43h2M16 43h1M29 43h1M40 43h2M43 43h3M47 43h1M49 43h2M52 43h1M58 43h1M79 43h2M84 43h2M90 43h1M29 44h1M32 44h1M43 44h1M48 44h1M53 44h1M55 44h1M59 44h1M63 44h1M70 44h2M73 44h1M89 44h1M6 45h1M17 45h1M23 45h1M27 45h1M37 45h1M39 45h1M43 45h1M45 45h1M54 45h1M58 45h1M60 45h1M62 45h1M64 45h1M70 45h1M86 45h2M1 46h1M5 46h1M14 46h1M20 46h1M25 46h1M31 46h1M39 46h3M43 46h2M51 46h1M54 46h1M59 46h1M61 46h2M64 46h1M71 46h1M74 46h1M76 46h2M80 46h2M86 46h1M89 46h1M7 47h1M11 47h2M15 47h1M23 47h1M26 47h1M29 47h2M35 47h1M38 47h1M40 47h1M43 47h1M58 47h1M62 47h1M64 47h1M78 47h1M81 47h2M86 47h1M25 48h1M39 48h1M44 48h1M50 48h1M56 48h1M59 48h2M68 48h1M1 49h2M8 49h1M31 49h1M33 49h1M37 49h1M44 49h1M47 49h1M58 49h5M65 49h2M68 49h1M71 49h1M74 49h1M76 49h1M78 49h1M82 49h1M5 50h1M7 50h1M11 50h1M22 50h2M26 50h1M31 50h1M33 50h1M44 50h1M64 50h1M70 50h1M72 50h2M76 50h2M82 50h1M84 50h1M5 51h1M13 51h1M39 51h1M44 51h1M46 51h1M56 51h1M59 51h3M70 51h1M72 51h1M78 51h1M81 51h1M3 52h1M22 52h1M34 52h1M56 52h1M60 52h1M80 52h1M2 53h1M36 53h1M39 53h4M44 53h1M57 53h2M60 53h1M63 53h1M73 53h1M76 53h1M80 53h1M14 54h1M26 54h1M28 54h1M38 54h1M56 54h2M62 54h1M65 54h1M70 54h1M72 54h2M19 55h1M22 55h1M29 55h1M43 55h2M54 55h2M62 55h1M69 55h1M74 55h2M78 55h1M0 56h1M6 56h1M13 56h1M16 56h1M28 56h1M33 56h1M35 56h1M40 56h2M58 56h1M60 56h2M72 56h1M76 56h1M2 57h1M12 57h1M18 57h5M26 57h1M34 57h1M53 57h1M55 57h1M58 57h1M62 57h1M64 57h1M69 57h3M75 57h1M1 58h1M8 58h1M17 58h1M21 58h1M29 58h2M39 58h1M42 58h1M50 58h1M52 58h1M65 58h1M67 58h1M2 59h1M9 59h2M14 59h1M17 59h1M21 59h2M26 59h1M35 59h1M38 59h1M42 59h2M55 59h1M60 59h1M64 59h2M68 59h1M2 60h1M6 60h1M26 60h1M36 60h2M40 60h1M48 60h1M50 60h1M52 60h1M54 60h1M60 60h1M63 60h1M0 61h1M2 61h1M11 61h1M27 61h1M34 61h1M36 61h2M40 61h1M47 61h1M49 61h1M55 61h2M65 61h1M67 61h1M11 62h1M15 62h1M27 62h1M32 62h1M40 62h2M45 62h1M48 62h1M66 62h1M69 62h1M4 63h1M6 63h1M12 63h1M16 63h1M22 63h1M32 63h1M40 63h1M42 63h1M44 63h1M54 63h1M56 63h1M59 63h2M66 63h1M2 64h1M10 64h1M20 64h1M24 64h1M34 64h1M36 64h1M39 64h1M43 64h1M52 64h1M55 64h1M60 64h1M65 64h2M8 65h3M18 65h1M36 65h1M39 65h1M41 65h1M44 65h1M53 65h2M57 65h1M60 65h1M64 65h1M5 66h2M8 66h1M20 66h1M33 66h1M38 66h1M48 66h1M50 66h1M56 66h1M61 66h1M64 66h1M20 67h1M37 67h1M42 67h1M47 67h3M52 67h1M57 67h1M2 68h1M6 68h1M10 68h1M21 68h2M25 68h1M27 68h1M40 68h1M48 68h2M53 68h1M56 68h1M6 69h1M9 69h1M15 69h1M18 69h1M21 69h1M31 69h1M36 69h4M47 69h1M51 69h1M53 69h2M2 70h1M5 70h1M11 70h1M20 70h1M25 70h1M30 70h1M32 70h1M41 70h1M43 70h1M47 70h1M55 70h1M12 71h1M14 71h1M18 71h1M20 71h1M27 71h1M32 71h1M34 71h1M37 71h1M40 71h1M42 71h1M44 71h1M46 71h1M50 71h1M53 71h1M58 71h1M21 72h1M24 72h2M30 72h1M33 72h1M36 72h1M49 72h2M56 72h1M0 73h1M2 73h1M8 73h1M11 73h1M21 73h2M30 73h1M34 73h1M38 73h2M44 73h2M49 73h1M52 73h2M55 73h1M8 74h1M13 74h1M20 74h1M26 74h1M29 74h2M35 74h1M40 74h1M43 74h1M46 74h2M4 75h1M6 75h1M9 75h1M16 75h1M21 75h1M32 75h2M38 75h1M47 75h3M51 75h2M9 76h2M15 76h1M17 76h1M25 76h1M28 76h2M33 76h1M45 76h1M48 76h1M50 76h1M4 77h1M12 77h1M19 77h1M23 77h1M29 77h1M39 77h1M43 77h1M4 78h1M9 78h1M19 78h1M23 78h1M28 78h1M41 78h1M24 79h1M28 79h3M41 79h2M44 79h1M0 80h1M8 80h1M11 80h1M19 80h1M27 80h1M29 80h4M40 80h1M1 81h1M10 81h2M17 81h1M21 81h1M32 81h1M39 81h1M41 81h1M1 82h1M4 82h1M13 82h1M15 82h2M21 82h1M40 82h2M0 83h1M3 83h2M6 83h1M9 83h1M17 83h1M26 83h1M31 83h2M35 83h1M37 83h1M39 83h1M41 83h1M14 84h1M19 84h3M28 84h1M30 84h1M36 84h1M44 84h1M2 85h1M9 85h1M11 85h1M15 85h1M25 85h1M32 85h1M34 85h1M38 85h1M1 86h1M19 86h1M27 86h2M32 86h1M34 86h1M1 87h1M4 87h2M13 87h1M15 87h2M18 87h1M21 87h2M1 88h1M3 88h1M6 88h1M12 88h1M14 88h1M16 88h1M20 88h1M34 88h1M36 88h1M1 89h1M11 89h1M17 89h1M25 89h1M31 89h1M2 90h1M14 90h1M20 90h2M30 90h1M3 91h1M6 91h1M19 91h1M26 91h1M29 91h2M33 91h1M1 92h1M4 92h1M14 92h1M26 92h2M30 92h1M5 93h1M7 93h1M14 93h1M22 93h1M7 94h1M29 94h1M9 95h1M11 95h2M17 95h1M21 95h2M26 95h1M30 95h1M5 96h1M8 96h2M15 96h1M17 96h1M4 97h1M6 97h1M8 97h3M13 97h1M16 97h2M22 97h1M25 97h1M0 98h1M14 98h1M1 99h2M23 99h1"/><path stroke="#63cb5f" d="M46 0h1M54 0h1M65 0h1M52 2h1M7 5h1M70 5h1M5 6h1M39 6h1M62 6h1M82 6h1M10 7h1M17 7h1M61 7h1M70 7h1M84 8h1M73 9h1M52 11h1M80 11h1M24 12h1M16 13h1M23 13h1M44 13h1M67 13h1M35 14h1M78 14h1M6 15h1M70 15h1M73 15h1M88 15h1M92 15h1M46 16h1M16 17h1M85 17h2M64 18h1M71 18h1M85 18h1M52 19h1M68 19h1M85 19h1M93 19h1M17 20h1M62 20h2M75 20h1M86 21h1M17 22h1M61 22h1M80 22h1M79 23h1M22 24h1M34 24h1M45 24h1M54 24h1M65 24h1M12 25h1M41 25h1M61 25h1M98 25h1M64 26h1M75 26h1M91 26h1M71 27h1M81 27h1M10 28h1M74 28h1M94 28h1M1 29h1M44 29h1M71 29h2M86 29h1M89 29h1M91 29h1M26 30h1M65 30h1M27 31h1M35 32h1M39 32h1M62 32h1M88 32h2M53 33h1M60 33h1M96 33h1M3 34h1M28 34h1M50 34h1M63 34h1M74 34h1M99 34h1M14 35h1M48 35h1M75 35h1M80 35h1M86 35h1M96 35h1M8 36h1M78 36h1M90 36h1M92 36h1M97 36h1M32 37h1M36 37h1M46 37h1M65 37h1M83 37h2M88 37h1M94 37h1M96 37h1M5 38h1M35 38h1M48 38h1M51 38h1M71 38h1M0 39h1M8 39h1M76 39h1M8 40h1M49 40h1M53 40h1M55 40h1M69 40h1M83 40h1M92 40h1M8 41h1M28 41h1M49 41h1M70 41h1M31 42h1M50 42h1M60 42h1M82 42h1M92 42h1M51 43h1M60 43h1M64 43h1M76 43h1M86 43h1M23 44h1M26 44h1M40 44h1M62 44h1M81 44h1M7 45h1M55 45h1M61 45h1M74 45h4M3 46h1M29 46h1M35 46h2M49 46h2M55 46h1M73 46h1M82 46h1M48 47h1M61 47h1M67 47h2M72 47h1M75 47h1M79 47h1M87 47h1M71 48h1M74 48h1M76 48h1M81 48h1M84 48h2M56 49h1M80 49h1M83 49h1M13 50h1M43 50h1M58 50h1M60 50h1M80 50h1M38 51h1M42 51h1M62 51h1M75 51h1M43 52h1M57 52h1M62 52h1M72 52h1M79 52h1M37 53h1M55 53h1M62 53h1M67 53h2M70 53h1M10 54h1M37 54h1M44 54h1M64 54h1M66 54h1M69 54h1M21 55h1M33 55h1M42 55h1M66 55h1M70 55h1M24 56h1M53 56h1M66 56h1M17 57h1M30 57h1M38 57h1M41 57h1M43 57h1M51 57h1M74 57h1M14 58h1M22 58h2M26 58h1M31 58h1M57 58h3M63 58h1M69 58h1M20 59h1M33 59h2M36 59h2M40 59h1M56 59h2M59 59h1M62 59h1M22 60h1M43 60h1M47 60h1M58 60h1M67 60h1M28 61h1M41 61h1M44 61h1M46 61h1M2 62h1M30 62h2M43 62h1M46 62h1M52 62h1M55 62h2M65 62h1M13 63h1M50 63h1M52 63h1M63 63h2M67 63h1M6 64h1M22 64h1M27 64h1M31 64h1M48 64h1M50 64h1M13 65h1M33 65h1M50 65h1M52 65h1M62 65h1M11 66h1M58 66h1M8 67h1M39 67h1M29 68h1M31 68h1M42 68h1M50 68h1M13 69h1M41 69h1M44 69h1M46 69h1M16 70h1M18 70h1M42 70h1M44 70h1M48 70h1M2 71h1M41 71h1M45 71h1M51 71h1M6 72h1M16 72h1M23 72h1M43 72h1M19 73h1M36 73h1M48 73h1M6 74h1M39 74h1M17 75h1M35 75h1M41 75h1M19 76h1M35 76h1M41 76h1M10 77h1M34 77h1M38 77h1M42 77h1M45 77h1M47 77h1M2 78h1M36 78h1M42 78h1M45 78h1M47 78h1M49 78h1M19 79h1M25 79h1M39 79h2M13 80h1M28 80h1M33 80h2M41 80h1M27 81h1M24 82h1M42 82h2M30 83h1M40 83h1M15 84h1M26 84h1M33 84h2M37 85h1M42 85h1M12 86h1M14 86h1M22 86h1M31 86h1M33 86h1M38 86h1M11 87h1M35 87h1M7 88h1M18 89h1M21 89h1M30 89h1M16 90h1M12 91h1M32 91h1M2 93h1M6 93h1M28 93h1M2 95h1M18 95h1M28 95h1M18 96h1M7 97h1M10 98h1M23 98h1M4 99h1M19 99h1"/><path stroke="#69cd5b" d="M44 1h1M67 2h1M7 3h1M11 7h1M83 10h1M72 13h1M12 16h1M22 16h1M54 17h1M27 19h1M81 22h1M94 25h1M67 26h1M34 31h1M46 31h1M68 31h1M83 33h1M20 34h1M92 35h1M84 36h1M58 38h1M49 39h1M66 39h1M93 39h1M67 40h1M38 41h1M54 41h1M92 41h1M73 42h1M8 44h1M46 45h2M49 45h1M56 45h1M2 46h1M56 46h2M67 46h1M50 47h1M46 48h1M49 48h1M32 49h1M35 49h1M45 49h1M48 49h1M57 49h1M47 50h1M61 50h1M14 51h1M37 51h1M64 51h1M37 52h1M46 52h1M58 52h1M75 52h1M77 52h1M45 53h1M61 53h1M69 53h1M74 53h1M4 55h1M57 56h1M74 56h1M14 57h1M44 57h1M60 57h1M9 58h1M20 58h1M54 58h1M16 59h1M41 60h1M44 60h1M53 60h1M70 61h1M51 62h1M57 62h1M51 63h1M42 64h1M61 64h1M58 65h1M4 66h1M37 66h1M36 67h1M41 67h1M61 67h1M12 68h1M55 68h1M48 69h1M52 69h1M36 70h1M28 71h1M44 75h1M46 75h1M2 76h1M44 76h1M48 77h1M5 78h1M22 79h1M42 81h1M36 85h1M35 86h2M33 87h1M25 88h1M33 88h1M28 91h1M16 93h1M24 94h1M28 94h1M23 97h2M4 98h1M8 99h1M18 99h1"/><path stroke="#6ece58" d="M50 15h1M68 17h1M89 37h1M57 38h1M45 40h1M90 40h1M94 42h1M53 46h1M42 47h1M49 47h1M51 47h2M55 47h1M47 48h1M54 48h2M56 50h1M47 51h1M55 52h1M77 53h1M54 54h1M43 56h2M69 56h1M41 58h1M53 58h1M48 59h1M57 60h1M50 61h1M46 64h1M66 65h1M32 77h1M25 78h1M15 98h1"/><path stroke="#75d054" d="M76 36h1M52 45h1M52 46h1M54 47h1M48 50h1M57 50h1M55 51h1M46 53h1M54 53h1M53 54h1M52 56h1M54 56h1M49 58h1M45 60h2M45 61h1M1 79h1M22 94h1"/><path stroke="#7ad151" d="M53 47h1M55 50h1M53 55h1M44 58h1M46 59h2M49 59h1"/><path stroke="#86d549" d="M51 48h1M49 49h1M55 49h1M45 54h1M45 55h1"/><path stroke="#9bd93c" d="M52 48h1M50 49h1M54 50h1M46 55h1M49 57h1"/><path stroke="#95d840" d="M53 48h1M45 57h1M50 57h1M45 58h2M48 58h1"/><path stroke="#b0dd2f" d="M51 49h1M52 54h1M50 56h1M48 57h1"/><path stroke="#b5de2b" d="M52 49h1M48 52h1M47 57h1"/><path stroke="#a8db34" d="M53 49h1M51 55h1"/><path stroke="#8ed645" d="M54 49h1M48 51h1M47 52h1M54 52h1M46 54h1M52 55h1M51 56h1"/><path stroke="#a2da37" d="M49 50h1M54 51h1M47 53h1M53 53h1M46 56h1M46 57h1M47 58h1"/><path stroke="#c2df23" d="M50 50h1M49 51h1M47 55h1M49 56h1"/><path stroke="#d2e21b" d="M51 50h2M48 53h1M52 53h1M51 54h1M50 55h1"/><path stroke="#bddf26" d="M53 50h1M53 52h1M47 54h1M47 56h1"/><path stroke="#dfe318" d="M50 51h1M49 52h1M52 52h1"/><path stroke="#ece51b" d="M51 51h1M50 52h1M49 53h1M51 53h1"/><path stroke="#e5e419" d="M52 51h1M49 54h2"/><path stroke="#cae11f" d="M53 51h1M48 56h1"/><path stroke="#f1e51d" d="M51 52h1M50 53h1"/><path stroke="#d8e219" d="M48 54h1M48 55h2"/><path stroke="#81d34d" d="M45 56h1M44 59h2"/></g></svg><svg class="a" style="left:0;top:230px" width="680" height="560" viewBox="0 230 680 560">
<clipPath id="cp"><rect x="94" y="247" width="529" height="490"/></clipPath>
<g clip-path="url(#cp)">
<path fill="#cdc8cc" fill-opacity="0.74" fill-rule="evenodd" d="M168.3 492a189.2 175 0 1 0 378.4 0a189.2 175 0 1 0 -378.4 0ZM196.2 492a161.3 149.5 0 1 0 322.6 0a161.3 149.5 0 1 0 -322.6 0Z"/>
<ellipse cx="358" cy="491.5" rx="109" ry="100" fill="none" stroke="#d93d2e" stroke-opacity="0.95" stroke-width="1.25" stroke-dasharray="4.7 2.1"/>
<path d="M347 481.8L368.4 501.8M368.4 481.8L347 501.8" stroke="#d6452f" stroke-opacity="0.85" stroke-width="1.25" fill="none"/>
</g>
<rect x="93.5" y="246.5" width="530" height="491" fill="none" stroke="#000" stroke-width="1"/>
<line x1="141.5" y1="738" x2="141.5" y2="742.5" stroke="#000" stroke-width="1"/>
<text x="141.5" y="756.6" text-anchor="middle" class="mt">1.6</text>
<line x1="249.5" y1="738" x2="249.5" y2="742.5" stroke="#000" stroke-width="1"/>
<text x="249.5" y="756.6" text-anchor="middle" class="mt">1.8</text>
<line x1="358.5" y1="738" x2="358.5" y2="742.5" stroke="#000" stroke-width="1"/>
<text x="358.5" y="756.6" text-anchor="middle" class="mt">2.0</text>
<line x1="466.5" y1="738" x2="466.5" y2="742.5" stroke="#000" stroke-width="1"/>
<text x="466.5" y="756.6" text-anchor="middle" class="mt">2.2</text>
<line x1="574.5" y1="738" x2="574.5" y2="742.5" stroke="#000" stroke-width="1"/>
<text x="574.5" y="756.6" text-anchor="middle" class="mt">2.4</text>
<line x1="88.5" y1="291.5" x2="93" y2="291.5" stroke="#000" stroke-width="1"/>
<text x="83.9" y="297.3" text-anchor="end" class="mt">3.4</text>
<line x1="88.5" y1="391.5" x2="93" y2="391.5" stroke="#000" stroke-width="1"/>
<text x="83.9" y="397.3" text-anchor="end" class="mt">3.2</text>
<line x1="88.5" y1="491.5" x2="93" y2="491.5" stroke="#000" stroke-width="1"/>
<text x="83.9" y="497.3" text-anchor="end" class="mt">3.0</text>
<line x1="88.5" y1="592.5" x2="93" y2="592.5" stroke="#000" stroke-width="1"/>
<text x="83.9" y="598.3" text-anchor="end" class="mt">2.8</text>
<line x1="88.5" y1="692.5" x2="93" y2="692.5" stroke="#000" stroke-width="1"/>
<text x="83.9" y="698.3" text-anchor="end" class="mt">2.6</text>
<text x="357.8" y="774" text-anchor="middle" class="mt">[H,0,0] (in 1.926 A^-1)</text>
<text transform="translate(54.3,493) rotate(-90)" text-anchor="middle" class="mt">[0,K,0] (in 2.176 A^-1)</text>
</svg><svg class="a" style="left:685px;top:318px" width="100" height="435" viewBox="685 318 100 435">
<defs><linearGradient id="vg" x1="0" y1="0" x2="0" y2="1"><stop offset="0.0000" stop-color="#fde725"/><stop offset="0.0312" stop-color="#ece51b"/><stop offset="0.0625" stop-color="#d8e219"/><stop offset="0.0938" stop-color="#c2df23"/><stop offset="0.1250" stop-color="#addc30"/><stop offset="0.1562" stop-color="#98d83e"/><stop offset="0.1875" stop-color="#84d44b"/><stop offset="0.2188" stop-color="#70cf57"/><stop offset="0.2500" stop-color="#5ec962"/><stop offset="0.2812" stop-color="#4ec36b"/><stop offset="0.3125" stop-color="#3fbc73"/><stop offset="0.3438" stop-color="#32b67a"/><stop offset="0.3750" stop-color="#28ae80"/><stop offset="0.4062" stop-color="#22a785"/><stop offset="0.4375" stop-color="#1fa088"/><stop offset="0.4688" stop-color="#1f988b"/><stop offset="0.5000" stop-color="#21918c"/><stop offset="0.5312" stop-color="#23898e"/><stop offset="0.5625" stop-color="#26828e"/><stop offset="0.5938" stop-color="#297a8e"/><stop offset="0.6250" stop-color="#2c728e"/><stop offset="0.6562" stop-color="#2f6b8e"/><stop offset="0.6875" stop-color="#33638d"/><stop offset="0.7188" stop-color="#375b8d"/><stop offset="0.7500" stop-color="#3b528b"/><stop offset="0.7812" stop-color="#3e4989"/><stop offset="0.8125" stop-color="#424086"/><stop offset="0.8438" stop-color="#453781"/><stop offset="0.8750" stop-color="#472d7b"/><stop offset="0.9062" stop-color="#482374"/><stop offset="0.9375" stop-color="#48186a"/><stop offset="0.9688" stop-color="#470d60"/><stop offset="1.0000" stop-color="#440154"/></linearGradient></defs>
<rect x="692.5" y="323.5" width="31" height="419" fill="url(#vg)" stroke="#000" stroke-width="1"/>
<path d="M724 716.30h5M724 704.67h5M724 697.86h5M724 693.04h5M724 689.29h5M724 686.23h5M724 683.65h5M724 681.40h5M724 679.43h5M724 677.66h5M724 666.03h5M724 659.22h5M724 654.40h5M724 650.65h5M724 647.59h5M724 645.01h5M724 642.76h5M724 640.79h5M724 639.02h5M724 627.39h5M724 620.58h5M724 615.76h5M724 612.01h5M724 608.95h5M724 606.37h5M724 604.12h5M724 602.15h5M724 600.38h5M724 588.75h5M724 581.94h5M724 577.12h5M724 573.37h5M724 570.31h5M724 567.73h5M724 565.48h5M724 563.51h5M724 561.74h5M724 550.11h5M724 543.30h5M724 538.48h5M724 534.73h5M724 531.67h5M724 529.09h5M724 526.84h5M724 524.87h5M724 523.10h5M724 511.47h5M724 504.66h5M724 499.84h5M724 496.09h5M724 493.03h5M724 490.45h5M724 488.20h5M724 486.23h5M724 484.46h5M724 472.83h5M724 466.02h5M724 461.20h5M724 457.45h5M724 454.39h5M724 451.81h5M724 449.56h5M724 447.59h5M724 445.82h5M724 434.19h5M724 427.38h5M724 422.56h5M724 418.81h5M724 415.75h5M724 413.17h5M724 410.92h5M724 408.95h5M724 407.18h5M724 395.55h5M724 388.74h5M724 383.92h5M724 380.17h5M724 377.11h5M724 374.53h5M724 372.28h5M724 370.31h5M724 368.54h5M724 356.91h5M724 350.10h5M724 345.28h5M724 341.53h5M724 338.47h5M724 335.89h5M724 333.64h5M724 331.67h5M724 329.90h5M724 742.00h5" stroke="#000" stroke-width="1" fill="none" shape-rendering="crispEdges"/>
<text x="733.2" y="722.3" class="mt">10<tspan dy="-5.6" font-size="9.8px" dx="-0.4">−8</tspan></text>
<text x="733.2" y="683.7" class="mt">10<tspan dy="-5.6" font-size="9.8px" dx="-0.4">−7</tspan></text>
<text x="733.2" y="645.0" class="mt">10<tspan dy="-5.6" font-size="9.8px" dx="-0.4">−6</tspan></text>
<text x="733.2" y="606.4" class="mt">10<tspan dy="-5.6" font-size="9.8px" dx="-0.4">−5</tspan></text>
<text x="733.2" y="567.7" class="mt">10<tspan dy="-5.6" font-size="9.8px" dx="-0.4">−4</tspan></text>
<text x="733.2" y="529.1" class="mt">10<tspan dy="-5.6" font-size="9.8px" dx="-0.4">−3</tspan></text>
<text x="733.2" y="490.5" class="mt">10<tspan dy="-5.6" font-size="9.8px" dx="-0.4">−2</tspan></text>
<text x="733.2" y="451.8" class="mt">10<tspan dy="-5.6" font-size="9.8px" dx="-0.4">−1</tspan></text>
<text x="733.2" y="413.2" class="mt">10<tspan dy="-5.6" font-size="9.8px" dx="-0.4">0</tspan></text>
<text x="733.2" y="374.5" class="mt">10<tspan dy="-5.6" font-size="9.8px" dx="-0.4">1</tspan></text>
<text x="733.2" y="335.9" class="mt">10<tspan dy="-5.6" font-size="9.8px" dx="-0.4">2</tspan></text>
<text x="733.2" y="747.0" class="mt">0</text>
</svg><!-- cursor info table -->
<div class="a" style="left:693px;top:130px;width:152px;height:70px;background:#fff;border:1px solid #c2c2c2"></div>
<div class="a" style="left:743px;top:131px;width:1px;height:59px;background:#d0d0d0"></div>
<div class="a" style="left:793px;top:131px;width:1px;height:59px;background:#d0d0d0"></div>
<div class="a" style="left:843px;top:131px;width:1px;height:59px;background:#d0d0d0"></div>
<div class="a" style="left:694px;top:160px;width:150px;height:1px;background:#d0d0d0"></div>
<div class="a" style="left:694px;top:190px;width:150px;height:1px;background:#d0d0d0"></div>
<div class="t" style="left:697px;top:139px;font-size:14.67px">x</div>
<div class="t" style="left:747px;top:139px;font-size:14.67px">y</div>
<div class="t" style="left:797px;top:139px;font-size:14.67px">Signal</div>
<div class="t" style="left:697px;top:169px;font-size:14.67px">-</div>
<div class="t" style="left:747px;top:169px;font-size:14.67px">-</div>
<div class="t" style="left:797px;top:169px;font-size:14.67px">-</div>

<div class="chk" style="left:692px;top:204px"></div>
<svg class="a" style="left:692px;top:204px" width="14" height="14" viewBox="0 0 14 14"><path d="M2.9 6.8 L5.9 11.2 L10.4 3" fill="none" stroke="#000" stroke-width="2"/></svg>
<div class="t" style="left:711px;top:205px;font-size:14.67px">Track Cursor</div>
<div class="t" style="left:692px;top:225px;font-size:14.67px;letter-spacing:0.3px">Colormap</div>
<div class="combo" style="left:692px;top:240px;width:155px"></div>
<div class="t" style="left:697px;top:246px;font-size:14.67px;letter-spacing:0.35px">viridis</div>
<div class="chk" style="left:692px;top:271px"></div>
<div class="t" style="left:711px;top:272px;font-size:14.67px">Reverse</div>
<div class="edit" style="left:720px;top:292px;width:100px"></div>
<div class="t" style="left:724px;top:298px;font-size:14.67px">149</div>

<div class="edit" style="left:720px;top:753px;width:100px;border:1px solid #2f77b3;box-shadow:inset 0 0 0 1px #d5e4f1"></div>
<div class="a" style="left:723px;top:757px;width:21px;height:17px;background:#308cc6"></div>
<div class="a" style="left:744px;top:757px;width:1px;height:17px;background:#111"></div>
<div class="t" style="left:724px;top:759px;font-size:14.67px;color:#fff">0.0</div>
<div class="combo" style="left:698px;top:780px;width:144px"></div>
<div class="t" style="left:703px;top:786px;font-size:14.67px;letter-spacing:0.3px">SymmetricLog10</div>
<div class="chk" style="left:692px;top:811px"></div>
<div class="t" style="left:711px;top:812px;font-size:14.67px;letter-spacing:0.3px">Autoscaling</div>
<svg class="a" style="left:680px;top:815px" width="12" height="14" viewBox="0 0 12 14"><g fill="#b9b9b9"><rect x="8" y="2" width="1" height="1"/><rect x="6" y="4" width="1" height="1"/><rect x="8" y="4" width="1" height="1"/><rect x="4" y="6" width="1" height="1"/><rect x="6" y="6" width="1" height="1"/><rect x="8" y="6" width="1" height="1"/><rect x="2" y="8" width="1" height="1"/><rect x="4" y="8" width="1" height="1"/><rect x="6" y="8" width="1" height="1"/><rect x="8" y="8" width="1" height="1"/></g></svg>
<!-- splitter handle dots -->
<svg class="a" style="left:857px;top:430px" width="4" height="20" viewBox="0 0 4 20"><g fill="#c4c4c4"><rect x="1" y="1" width="1" height="1"/><rect x="1" y="4" width="1" height="1"/><rect x="1" y="7" width="1" height="1"/><rect x="1" y="10" width="1" height="1"/><rect x="1" y="13" width="1" height="1"/><rect x="1" y="16" width="1" height="1"/></g></svg>
<div class="t" style="left:880px;top:58px;font-size:15.2px;color:#d9333f">Workspace: mdws_integrated</div>
<div class="a" style="left:879px;top:75px;width:357px;height:746px;border:1px solid #dadada;border-radius:3px;background:#ececec"></div>
<div class="a" id="tbl" style="left:890px;top:86px;width:334px;height:723px;border:1px solid #b6b6b6;background:#fff;overflow:hidden">
<div class="a" style="left:0px;top:0px;width:319px;height:21px;background:linear-gradient(#fbfbfb,#f4f4f4 45%,#ebebeb);border-bottom:1px solid #b6b6b6"></div>
<div class="a" style="left:142px;top:0px;width:1px;height:20px;background:#cfcfcf"></div>
<div class="a" style="left:212px;top:0px;width:1px;height:20px;background:#cfcfcf"></div>
<div class="a" style="left:278px;top:0px;width:1px;height:20px;background:#cfcfcf"></div>
<div class="t" style="left:30px;top:4px;font-size:14.67px;width:112px;text-align:center;font-weight:bold;font-size:14.8px">RunNumber</div>
<div class="t" style="left:143px;top:4px;font-size:14.67px;width:69px;text-align:center;font-weight:bold;font-size:14.8px">DetID</div>
<div class="t" style="left:213px;top:4px;font-size:14.67px;width:65px;text-align:center;font-weight:bold;font-size:14.8px">h</div>
<div class="t" style="left:279px;top:4px;font-size:14.67px;width:66px;text-align:center;font-weight:bold;font-size:14.8px">k</div>
<div class="a" style="left:0px;top:21px;width:30px;height:30px;background:linear-gradient(#fbfbfb,#f3f3f3 50%,#ebebeb);border-right:1px solid #b6b6b6;border-bottom:1px solid #b6b6b6"></div>
<div class="a" style="left:30px;top:50px;width:289px;height:1px;background:#cdcdcd"></div>
<div class="t" style="left:2px;top:30px;font-size:14.67px;">1</div>
<div class="t" style="left:33px;top:29px;font-size:14.67px;">23767</div>
<div class="t" style="left:146px;top:29px;font-size:14.67px;">2036</div>
<div class="t" style="left:217px;top:29px;font-size:14.67px;">1.00000</div>
<div class="t" style="left:282px;top:29px;font-size:14.67px;">3.000</div>
<div class="a" style="left:0px;top:51px;width:30px;height:30px;background:linear-gradient(#fbfbfb,#f3f3f3 50%,#ebebeb);border-right:1px solid #b6b6b6;border-bottom:1px solid #b6b6b6"></div>
<div class="a" style="left:30px;top:80px;width:289px;height:1px;background:#cdcdcd"></div>
<div class="t" style="left:2px;top:60px;font-size:14.67px;">2</div>
<div class="t" style="left:33px;top:59px;font-size:14.67px;">23767</div>
<div class="t" style="left:146px;top:59px;font-size:14.67px;">324</div>
<div class="t" style="left:217px;top:59px;font-size:14.67px;">3.00000</div>
<div class="t" style="left:282px;top:59px;font-size:14.67px;">4.000</div>
<div class="a" style="left:0px;top:81px;width:30px;height:30px;background:linear-gradient(#fbfbfb,#f3f3f3 50%,#ebebeb);border-right:1px solid #b6b6b6;border-bottom:1px solid #b6b6b6"></div>
<div class="a" style="left:30px;top:110px;width:289px;height:1px;background:#cdcdcd"></div>
<div class="t" style="left:2px;top:90px;font-size:14.67px;">3</div>
<div class="t" style="left:33px;top:89px;font-size:14.67px;">23767</div>
<div class="t" style="left:146px;top:89px;font-size:14.67px;">1380</div>
<div class="t" style="left:217px;top:89px;font-size:14.67px;">1.00000</div>
<div class="t" style="left:282px;top:89px;font-size:14.67px;">2.000</div>
<div class="a" style="left:0px;top:111px;width:30px;height:30px;background:linear-gradient(#fbfbfb,#f3f3f3 50%,#ebebeb);border-right:1px solid #b6b6b6;border-bottom:1px solid #b6b6b6"></div>
<div class="a" style="left:30px;top:140px;width:289px;height:1px;background:#cdcdcd"></div>
<div class="t" style="left:2px;top:120px;font-size:14.67px;">4</div>
<div class="t" style="left:33px;top:119px;font-size:14.67px;">23767</div>
<div class="t" style="left:146px;top:119px;font-size:14.67px;">1380</div>
<div class="t" style="left:217px;top:119px;font-size:14.67px;">2.00000</div>
<div class="t" style="left:282px;top:119px;font-size:14.67px;">4.000</div>
<div class="a" style="left:0px;top:141px;width:30px;height:30px;background:linear-gradient(#fbfbfb,#f3f3f3 50%,#ebebeb);border-right:1px solid #b6b6b6;border-bottom:1px solid #b6b6b6"></div>
<div class="a" style="left:30px;top:170px;width:289px;height:1px;background:#cdcdcd"></div>
<div class="t" style="left:2px;top:150px;font-size:14.67px;">5</div>
<div class="t" style="left:33px;top:149px;font-size:14.67px;">23767</div>
<div class="t" style="left:146px;top:149px;font-size:14.67px;">3285</div>
<div class="t" style="left:217px;top:149px;font-size:14.67px;">2.00000</div>
<div class="t" style="left:282px;top:149px;font-size:14.67px;">5.000</div>
<div class="a" style="left:0px;top:171px;width:30px;height:30px;background:linear-gradient(#fbfbfb,#f3f3f3 50%,#ebebeb);border-right:1px solid #b6b6b6;border-bottom:1px solid #b6b6b6"></div>
<div class="a" style="left:30px;top:200px;width:289px;height:1px;background:#cdcdcd"></div>
<div class="t" style="left:2px;top:180px;font-size:14.67px;">6</div>
<div class="t" style="left:33px;top:179px;font-size:14.67px;">23767</div>
<div class="t" style="left:146px;top:179px;font-size:14.67px;">4012</div>
<div class="t" style="left:217px;top:179px;font-size:14.67px;">1.00000</div>
<div class="t" style="left:282px;top:179px;font-size:14.67px;">5.000</div>
<div class="a" style="left:0px;top:201px;width:30px;height:30px;background:linear-gradient(#fbfbfb,#f3f3f3 50%,#ebebeb);border-right:1px solid #b6b6b6;border-bottom:1px solid #b6b6b6"></div>
<div class="a" style="left:30px;top:230px;width:289px;height:1px;background:#cdcdcd"></div>
<div class="t" style="left:2px;top:210px;font-size:14.67px;">7</div>
<div class="t" style="left:33px;top:209px;font-size:14.67px;">23767</div>
<div class="t" style="left:146px;top:209px;font-size:14.67px;">252</div>
<div class="t" style="left:217px;top:209px;font-size:14.67px;">1.00000</div>
<div class="t" style="left:282px;top:209px;font-size:14.67px;">2.000</div>
<div class="a" style="left:0px;top:231px;width:30px;height:30px;background:linear-gradient(#fbfbfb,#f3f3f3 50%,#ebebeb);border-right:1px solid #b6b6b6;border-bottom:1px solid #b6b6b6"></div>
<div class="a" style="left:30px;top:260px;width:289px;height:1px;background:#cdcdcd"></div>
<div class="t" style="left:2px;top:240px;font-size:14.67px;">8</div>
<div class="t" style="left:33px;top:239px;font-size:14.67px;">23767</div>
<div class="t" style="left:146px;top:239px;font-size:14.67px;">2299</div>
<div class="t" style="left:217px;top:239px;font-size:14.67px;">1.00000</div>
<div class="t" style="left:282px;top:239px;font-size:14.67px;">4.000</div>
<div class="a" style="left:0px;top:261px;width:30px;height:30px;background:linear-gradient(#fbfbfb,#f3f3f3 50%,#ebebeb);border-right:1px solid #b6b6b6;border-bottom:1px solid #b6b6b6"></div>
<div class="a" style="left:30px;top:290px;width:289px;height:1px;background:#cdcdcd"></div>
<div class="a" style="left:30px;top:261px;width:289px;height:30px;background:#308cc6"></div>
<div class="t" style="left:2px;top:270px;font-size:14.67px;font-weight:bold;">9</div>
<div class="t" style="left:33px;top:269px;font-size:14.67px;color:#fff;">23767</div>
<div class="t" style="left:146px;top:269px;font-size:14.67px;color:#fff;">720</div>
<div class="t" style="left:217px;top:269px;font-size:14.67px;color:#fff;">2.00000</div>
<div class="t" style="left:282px;top:269px;font-size:14.67px;color:#fff;">3.000</div>
<div class="a" style="left:0px;top:291px;width:30px;height:30px;background:linear-gradient(#fbfbfb,#f3f3f3 50%,#ebebeb);border-right:1px solid #b6b6b6;border-bottom:1px solid #b6b6b6"></div>
<div class="a" style="left:30px;top:320px;width:289px;height:1px;background:#cdcdcd"></div>
<div class="t" style="left:2px;top:300px;font-size:14.67px;">10</div>
<div class="t" style="left:33px;top:299px;font-size:14.67px;">23767</div>
<div class="t" style="left:146px;top:299px;font-size:14.67px;">3233</div>
<div class="t" style="left:217px;top:299px;font-size:14.67px;">1.00000</div>
<div class="t" style="left:282px;top:299px;font-size:14.67px;">3.000</div>
<div class="a" style="left:0px;top:321px;width:30px;height:30px;background:linear-gradient(#fbfbfb,#f3f3f3 50%,#ebebeb);border-right:1px solid #b6b6b6;border-bottom:1px solid #b6b6b6"></div>
<div class="a" style="left:30px;top:350px;width:289px;height:1px;background:#cdcdcd"></div>
<div class="t" style="left:2px;top:330px;font-size:14.67px;">11</div>
<div class="t" style="left:33px;top:329px;font-size:14.67px;">23767</div>
<div class="t" style="left:146px;top:329px;font-size:14.67px;">38877</div>
<div class="t" style="left:217px;top:329px;font-size:14.67px;">4.00000</div>
<div class="t" style="left:282px;top:329px;font-size:14.67px;">4.000</div>
<div class="a" style="left:0px;top:351px;width:30px;height:30px;background:linear-gradient(#fbfbfb,#f3f3f3 50%,#ebebeb);border-right:1px solid #b6b6b6;border-bottom:1px solid #b6b6b6"></div>
<div class="a" style="left:30px;top:380px;width:289px;height:1px;background:#cdcdcd"></div>
<div class="t" style="left:2px;top:360px;font-size:14.67px;">12</div>
<div class="t" style="left:33px;top:359px;font-size:14.67px;">23767</div>
<div class="t" style="left:146px;top:359px;font-size:14.67px;">38877</div>
<div class="t" style="left:217px;top:359px;font-size:14.67px;">2.00000</div>
<div class="t" style="left:282px;top:359px;font-size:14.67px;">2.000</div>
<div class="a" style="left:0px;top:381px;width:30px;height:30px;background:linear-gradient(#fbfbfb,#f3f3f3 50%,#ebebeb);border-right:1px solid #b6b6b6;border-bottom:1px solid #b6b6b6"></div>
<div class="a" style="left:30px;top:410px;width:289px;height:1px;background:#cdcdcd"></div>
<div class="t" style="left:2px;top:390px;font-size:14.67px;">13</div>
<div class="t" style="left:33px;top:389px;font-size:14.67px;">23767</div>
<div class="t" style="left:146px;top:389px;font-size:14.67px;">38877</div>
<div class="t" style="left:217px;top:389px;font-size:14.67px;">3.00000</div>
<div class="t" style="left:282px;top:389px;font-size:14.67px;">3.000</div>
<div class="a" style="left:0px;top:411px;width:30px;height:30px;background:linear-gradient(#fbfbfb,#f3f3f3 50%,#ebebeb);border-right:1px solid #b6b6b6;border-bottom:1px solid #b6b6b6"></div>
<div class="a" style="left:30px;top:440px;width:289px;height:1px;background:#cdcdcd"></div>
<div class="t" style="left:2px;top:420px;font-size:14.67px;">14</div>
<div class="t" style="left:33px;top:419px;font-size:14.67px;">23767</div>
<div class="t" style="left:146px;top:419px;font-size:14.67px;">38270</div>
<div class="t" style="left:217px;top:419px;font-size:14.67px;">4.00000</div>
<div class="t" style="left:282px;top:419px;font-size:14.67px;">3.000</div>
<div class="a" style="left:0px;top:441px;width:30px;height:30px;background:linear-gradient(#fbfbfb,#f3f3f3 50%,#ebebeb);border-right:1px solid #b6b6b6;border-bottom:1px solid #b6b6b6"></div>
<div class="a" style="left:30px;top:470px;width:289px;height:1px;background:#cdcdcd"></div>
<div class="t" style="left:2px;top:450px;font-size:14.67px;">15</div>
<div class="t" style="left:33px;top:449px;font-size:14.67px;">23767</div>
<div class="t" style="left:146px;top:449px;font-size:14.67px;">43730</div>
<div class="t" style="left:217px;top:449px;font-size:14.67px;">5.00000</div>
<div class="t" style="left:282px;top:449px;font-size:14.67px;">5.000</div>
<div class="a" style="left:0px;top:471px;width:30px;height:30px;background:linear-gradient(#fbfbfb,#f3f3f3 50%,#ebebeb);border-right:1px solid #b6b6b6;border-bottom:1px solid #b6b6b6"></div>
<div class="a" style="left:30px;top:500px;width:289px;height:1px;background:#cdcdcd"></div>
<div class="t" style="left:2px;top:480px;font-size:14.67px;">16</div>
<div class="t" style="left:33px;top:479px;font-size:14.67px;">23767</div>
<div class="t" style="left:146px;top:479px;font-size:14.67px;">41699</div>
<div class="t" style="left:217px;top:479px;font-size:14.67px;">6.00000</div>
<div class="t" style="left:282px;top:479px;font-size:14.67px;">5.000</div>
<div class="a" style="left:0px;top:501px;width:30px;height:30px;background:linear-gradient(#fbfbfb,#f3f3f3 50%,#ebebeb);border-right:1px solid #b6b6b6;border-bottom:1px solid #b6b6b6"></div>
<div class="a" style="left:30px;top:530px;width:289px;height:1px;background:#cdcdcd"></div>
<div class="t" style="left:2px;top:510px;font-size:14.67px;">17</div>
<div class="t" style="left:33px;top:509px;font-size:14.67px;">23767</div>
<div class="t" style="left:146px;top:509px;font-size:14.67px;">42813</div>
<div class="t" style="left:217px;top:509px;font-size:14.67px;">3.00000</div>
<div class="t" style="left:282px;top:509px;font-size:14.67px;">2.000</div>
<div class="a" style="left:0px;top:531px;width:30px;height:30px;background:linear-gradient(#fbfbfb,#f3f3f3 50%,#ebebeb);border-right:1px solid #b6b6b6;border-bottom:1px solid #b6b6b6"></div>
<div class="a" style="left:30px;top:560px;width:289px;height:1px;background:#cdcdcd"></div>
<div class="t" style="left:2px;top:540px;font-size:14.67px;">18</div>
<div class="t" style="left:33px;top:539px;font-size:14.67px;">23767</div>
<div class="t" style="left:146px;top:539px;font-size:14.67px;">42749</div>
<div class="t" style="left:217px;top:539px;font-size:14.67px;">6.00000</div>
<div class="t" style="left:282px;top:539px;font-size:14.67px;">4.000</div>
<div class="a" style="left:0px;top:561px;width:30px;height:30px;background:linear-gradient(#fbfbfb,#f3f3f3 50%,#ebebeb);border-right:1px solid #b6b6b6;border-bottom:1px solid #b6b6b6"></div>
<div class="a" style="left:30px;top:590px;width:289px;height:1px;background:#cdcdcd"></div>
<div class="t" style="left:2px;top:570px;font-size:14.67px;">19</div>
<div class="t" style="left:33px;top:569px;font-size:14.67px;">23767</div>
<div class="t" style="left:146px;top:569px;font-size:14.67px;">44563</div>
<div class="t" style="left:217px;top:569px;font-size:14.67px;">3.00000</div>
<div class="t" style="left:282px;top:569px;font-size:14.67px;">3.000</div>
<div class="a" style="left:0px;top:591px;width:30px;height:30px;background:linear-gradient(#fbfbfb,#f3f3f3 50%,#ebebeb);border-right:1px solid #b6b6b6;border-bottom:1px solid #b6b6b6"></div>
<div class="a" style="left:30px;top:620px;width:289px;height:1px;background:#cdcdcd"></div>
<div class="t" style="left:2px;top:600px;font-size:14.67px;">20</div>
<div class="t" style="left:33px;top:599px;font-size:14.67px;">23767</div>
<div class="t" style="left:146px;top:599px;font-size:14.67px;">44342</div>
<div class="t" style="left:217px;top:599px;font-size:14.67px;">4.00000</div>
<div class="t" style="left:282px;top:599px;font-size:14.67px;">3.000</div>
<div class="a" style="left:0px;top:621px;width:30px;height:30px;background:linear-gradient(#fbfbfb,#f3f3f3 50%,#ebebeb);border-right:1px solid #b6b6b6;border-bottom:1px solid #b6b6b6"></div>
<div class="a" style="left:30px;top:650px;width:289px;height:1px;background:#cdcdcd"></div>
<div class="t" style="left:2px;top:630px;font-size:14.67px;">21</div>
<div class="t" style="left:33px;top:629px;font-size:14.67px;">23767</div>
<div class="t" style="left:146px;top:629px;font-size:14.67px;">41068</div>
<div class="t" style="left:217px;top:629px;font-size:14.67px;">4.00000</div>
<div class="t" style="left:282px;top:629px;font-size:14.67px;">3.000</div>
<div class="a" style="left:0px;top:651px;width:30px;height:30px;background:linear-gradient(#fbfbfb,#f3f3f3 50%,#ebebeb);border-right:1px solid #b6b6b6;border-bottom:1px solid #b6b6b6"></div>
<div class="a" style="left:30px;top:680px;width:289px;height:1px;background:#cdcdcd"></div>
<div class="t" style="left:2px;top:660px;font-size:14.67px;">22</div>
<div class="t" style="left:33px;top:659px;font-size:14.67px;">23767</div>
<div class="t" style="left:146px;top:659px;font-size:14.67px;">42513</div>
<div class="t" style="left:217px;top:659px;font-size:14.67px;">4.00000</div>
<div class="t" style="left:282px;top:659px;font-size:14.67px;">4.000</div>
<div class="a" style="left:0px;top:681px;width:30px;height:30px;background:linear-gradient(#fbfbfb,#f3f3f3 50%,#ebebeb);border-right:1px solid #b6b6b6;border-bottom:1px solid #b6b6b6"></div>
<div class="a" style="left:30px;top:710px;width:289px;height:1px;background:#cdcdcd"></div>
<div class="t" style="left:2px;top:690px;font-size:14.67px;">23</div>
<div class="t" style="left:33px;top:689px;font-size:14.67px;">23767</div>
<div class="t" style="left:146px;top:689px;font-size:14.67px;">42513</div>
<div class="t" style="left:217px;top:689px;font-size:14.67px;">2.00000</div>
<div class="t" style="left:282px;top:689px;font-size:14.67px;">2.000</div>
<div class="a" style="left:142px;top:21px;width:1px;height:240px;background:#cdcdcd"></div>
<div class="a" style="left:142px;top:291px;width:1px;height:416px;background:#cdcdcd"></div>
<div class="a" style="left:142px;top:261px;width:1px;height:30px;background:#4a9bd0"></div>
<div class="a" style="left:212px;top:21px;width:1px;height:240px;background:#cdcdcd"></div>
<div class="a" style="left:212px;top:291px;width:1px;height:416px;background:#cdcdcd"></div>
<div class="a" style="left:212px;top:261px;width:1px;height:30px;background:#4a9bd0"></div>
<div class="a" style="left:278px;top:21px;width:1px;height:240px;background:#cdcdcd"></div>
<div class="a" style="left:278px;top:291px;width:1px;height:416px;background:#cdcdcd"></div>
<div class="a" style="left:278px;top:261px;width:1px;height:30px;background:#4a9bd0"></div>
<div class="a" style="left:318px;top:0px;width:14px;height:707px;background:#dcdcdc;border-left:1px solid #c2c2c2"></div>
<div class="a" style="left:318px;top:0px;width:14px;height:13px;background:#f6f6f6;border-left:1px solid #c2c2c2;border-bottom:1px solid #d0d0d0"></div>
<div class="a" style="left:318px;top:13px;width:14px;height:76px;background:linear-gradient(90deg,#fafafa,#ececec);border-left:1px solid #c2c2c2;border-bottom:1px solid #c6c6c6"></div>
<div class="a" style="left:318px;top:693px;width:14px;height:14px;background:#f6f6f6;border-left:1px solid #c2c2c2;border-top:1px solid #d0d0d0"></div>
<div class="a" style="left:0px;top:707px;width:332px;height:14px;background:#dcdcdc;border-top:1px solid #c2c2c2"></div>
<div class="a" style="left:0px;top:707px;width:14px;height:14px;background:#f6f6f6;border-top:1px solid #c2c2c2;border-right:1px solid #d0d0d0"></div>
<div class="a" style="left:14px;top:707px;width:30px;height:14px;background:linear-gradient(#fafafa,#ececec);border-top:1px solid #c2c2c2;border-right:1px solid #c6c6c6"></div>
<div class="a" style="left:304px;top:707px;width:14px;height:14px;background:#f6f6f6;border-top:1px solid #c2c2c2;border-left:1px solid #d0d0d0"></div>
<div class="a" style="left:318px;top:707px;width:14px;height:14px;background:#f0f0f0;border-top:1px solid #c2c2c2;border-left:1px solid #c2c2c2"></div>
<svg class="a" style="left:0;top:0" width="332" height="721" viewBox="891 87 332 721"><g fill="#555"><path d="M1212.5 95.5h8l-4-4.2z"/><path d="M1212.5 785h8l-4 4.2z"/><path d="M900 797.2v8l-4.2-4z"/><path d="M1200.5 797.2v8l4.2-4z"/></g></svg>
</div>
</body>
</html>
